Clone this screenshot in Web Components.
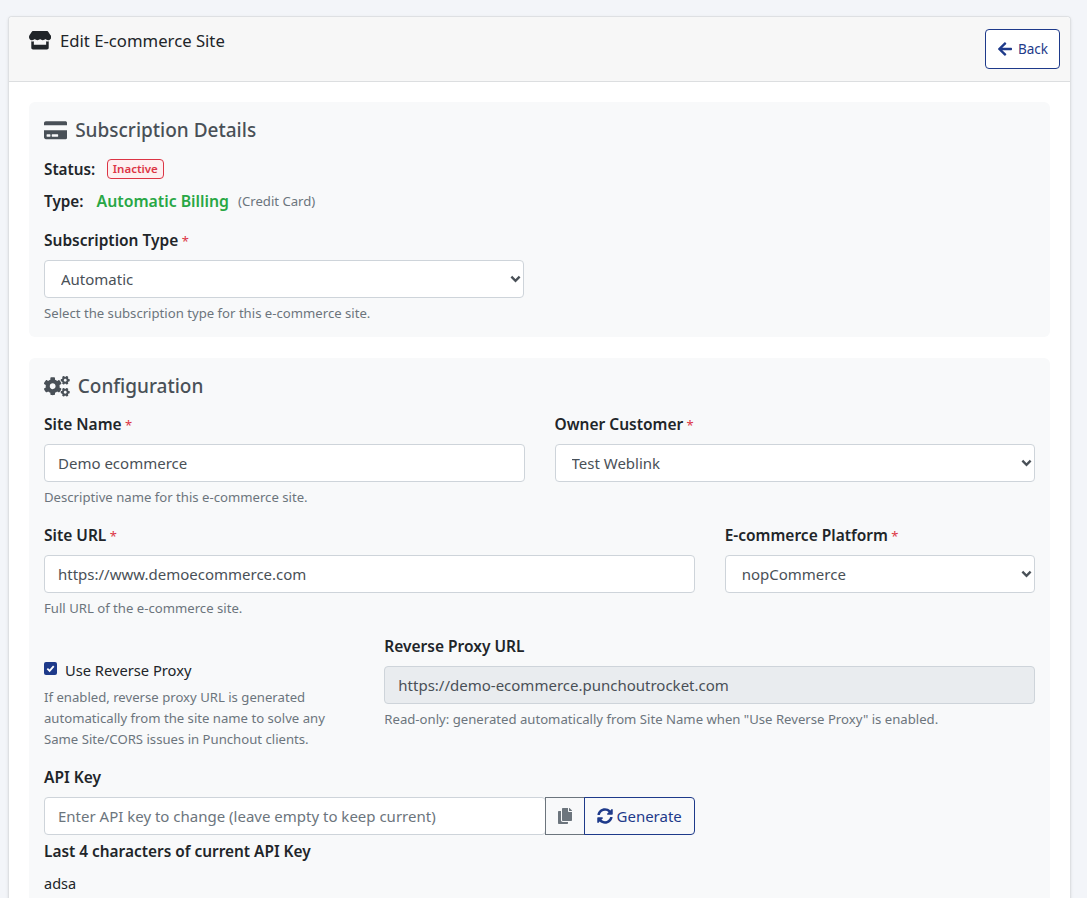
<!DOCTYPE html>
<html lang="en">
<head>
<meta charset="utf-8">
<title>Edit E-commerce Site</title>
<style>
    html, body { height: 100%; overflow: hidden; }
    body {
        margin: 0;
        padding: 16px 16px 0 8px;
        box-sizing: border-box;
        background: #f3f5f9;
        color: #212529;
        font: 16px/24px "Noto Sans", "Open Sans", sans-serif;
    }
</style>
</head>
<body>

<template id="card-template">
    <style>
        :host { display: block; background: #fff; border: 1px solid #dee0e3; border-bottom: 0; border-radius: 4px 4px 0 0; box-shadow: 0 1px 3px rgba(0,0,0,.1); }
        header { display: flex; justify-content: space-between; height: 65px; box-sizing: border-box; padding: 12px 10px 0 20px; background: #f7f7f7; border-bottom: 1px solid #dcdee0; border-radius: 4px 4px 0 0; }
        h1 { display: flex; gap: 9px; margin: 0; font-size: 16.7px; font-weight: 400; line-height: 24px; }
        ::slotted([slot="icon"]) { width: 22px; height: 18.5px; margin-top: 2px; fill: #212529; }
        main { padding: 20px 20px 0; display: grid; gap: 21px; }
    </style>
    <header>
        <h1><slot name="icon"></slot><slot name="title"></slot></h1>
        <slot name="action"></slot>
    </header>
    <main><slot></slot></main>
</template>

<template id="section-template">
    <style>
        :host { display: block; padding: 15px 15px 13px; background: #f8f9fa; border-radius: 6px; }
        h2 { display: flex; align-items: center; gap: 8px; margin: 0 0 13px; height: 27px; font-size: 19px; font-weight: 500; line-height: 27px; color: #495057; }
        ::slotted(svg) { height: 20.6px; width: auto; flex: none; fill: #495057; }
    </style>
    <h2><slot name="icon"></slot><slot name="title"></slot></h2>
    <slot></slot>
</template>

<template id="row-template">
    <style>
        :host { display: grid; column-gap: 30px; grid-template-columns: var(--cols, 1fr 1fr); }
    </style>
    <slot></slot>
</template>

<template id="field-template">
    <style>
        :host { display: block; margin-bottom: 16px; min-width: 0; }
        label { display: block; margin-bottom: 9px; font-size: 15.5px; font-weight: 600; line-height: 22px; color: #212529; }
        .req { display: none; font-size: 13px; line-height: 0; color: #dc3545; font-weight: 400; }
        :host([required]) .req { display: inline; }
        .help { display: block; margin-top: 5px; font-size: 13.15px; line-height: 21px; color: #6c757d; }
        :host([nohelp]) .help { display: none; }
    </style>
    <label><span id="label"></span><span class="req"> *</span></label>
    <slot></slot>
    <span class="help"><slot name="help"></slot></span>
</template>

<template id="input-template">
    <style>
        :host { display: block; }
        input { display: block; width: 100%; height: 38px; box-sizing: border-box; padding: 0 13px; font: 15px "Noto Sans", sans-serif; color: #495057; background: #fff; border: 1px solid #ced4da; border-radius: 4px; outline: 0; }
        input::placeholder { color: #6c757d; opacity: 1; }
        input[readonly] { background: #e9ecef; }
    </style>
    <input>
</template>

<template id="select-template">
    <style>
        :host { display: block; position: relative; }
        select { display: block; width: 100%; height: 38px; box-sizing: border-box; padding: 0 30px 0 16px; font: 15px "Noto Sans", sans-serif; color: #495057; background: #fff; border: 1px solid #ced4da; border-radius: 4px; outline: 0; appearance: none; }
        svg { position: absolute; right: 3px; top: 15px; width: 11px; height: 8px; fill: none; stroke: #495057; stroke-width: 2.6; pointer-events: none; }
    </style>
    <select><slot></slot></select>
    <svg viewBox="0 0 12 8"><path d="M1.5 1.5 6 6l4.5-4.5"/></svg>
</template>

<template id="badge-template">
    <style>
        :host { display: inline-block; padding: 0 5px; font-size: 11.5px; font-weight: 600; line-height: 18px; color: #dc3545; background: #fdf0f1; border: 1px solid #dc3545; border-radius: 4px; }
    </style>
    <slot></slot>
</template>

<template id="button-template">
    <style>
        :host { display: inline-flex; align-items: center; justify-content: center; gap: 4px; box-sizing: border-box; height: 38px; padding: 0 12px; font-size: 15px; color: #1e3a8a; background: #fff; border: 1px solid #1e3a8a; border-radius: 4px; cursor: pointer; }
        ::slotted(svg) { height: 16px; width: auto; flex: none; fill: currentColor; }
    </style>
    <slot></slot>
</template>

<template id="checkbox-template">
    <style>
        :host { display: flex; align-items: center; gap: 8px; font-size: 14.7px; line-height: 24px; }
        span { display: flex; align-items: center; justify-content: center; width: 13px; height: 13px; background: #1e3a8a; border-radius: 2px; margin-top: -3px; }
        svg { width: 9px; height: 9px; fill: none; stroke: #fff; stroke-width: 2; }
    </style>
    <span><svg viewBox="0 0 10 10"><path d="M1.5 5.2 4 7.7l4.6-5.4"/></svg></span>
    <slot></slot>
</template>

<store-card>
    <svg slot="icon" viewBox="0 0 616 512"><path d="M602 118.6 537.1 15C531.3 5.7 521 0 510 0H106C95 0 84.7 5.7 78.9 15L14 118.6c-33.9 54.1-3.9 129.3 59.4 137.9 4.6.6 9.1.9 13.8.9 29.9 0 56.4-13.1 74.6-33.4 18.2 20.3 44.8 33.4 74.6 33.4s56.4-13.1 74.6-33.4c18.2 20.3 44.8 33.4 74.6 33.4 29.9 0 56.4-13.1 74.6-33.4 18.2 20.3 44.8 33.4 74.6 33.4 4.6 0 9.2-.3 13.7-.9 63.5-8.5 93.6-83.7 59.4-137.9zM64 283v181c0 26.5 21.5 48 48 48h392c26.5 0 48-21.5 48-48V283c-20 7-50 7-72 0v101H136V283c-22 7-52 7-72 0z"/></svg>
    <span slot="title">Edit E-commerce Site</span>
    <store-button slot="action" style="height:40px;width:75px;padding-right:0;font-size:13.5px;justify-content:flex-start;gap:6px"><svg viewBox="0 0 448 512"><path d="M257.5 445.1l-22.2 22.2c-9.4 9.4-24.6 9.4-33.9 0L7 273c-9.4-9.4-9.4-24.6 0-33.9L201.4 44.7c9.4-9.4 24.6-9.4 33.9 0l22.2 22.2c9.5 9.5 9.3 25-.4 34.3L136.6 216H424c13.3 0 24 10.7 24 24v32c0 13.3-10.7 24-24 24H136.6l120.5 114.8c9.8 9.3 10 24.8.4 34.3z"/></svg>Back</store-button>

    <form-section>
        <svg slot="icon" viewBox="0 0 576 512"><path d="M0 432c0 26.5 21.5 48 48 48h480c26.5 0 48-21.5 48-48V256H0v176zm192-68c0-6.6 5.4-12 12-12h136c6.6 0 12 5.4 12 12v40c0 6.6-5.4 12-12 12H204c-6.6 0-12-5.4-12-12v-40zm-128 0c0-6.6 5.4-12 12-12h72c6.6 0 12 5.4 12 12v40c0 6.6-5.4 12-12 12H76c-6.6 0-12-5.4-12-12v-40zM576 80v48H0V80c0-26.5 21.5-48 48-48h480c26.5 0 48 21.5 48 48z"/></svg>
        <span slot="title">Subscription Details</span>
        <div style="display:flex;gap:11.5px;align-items:center;height:32px;margin-top:-4px;font-size:15.3px;font-weight:600">Status: <status-badge>Inactive</status-badge></div>
        <div style="display:flex;gap:12px;align-items:center;height:32px;font-size:15.3px;font-weight:600">Type: <span style="font-size:15.8px;color:#28a745;margin-left:1px">Automatic Billing</span><span style="font-size:13.15px;font-weight:400;color:#6c757d;margin-left:-3px">(Credit Card)</span></div>
        <form-row style="--cols:480px 1fr;margin-top:12px">
            <form-field label="Subscription Type" required style="margin:0">
                <form-select><option>Automatic</option></form-select>
                <span slot="help">Select the subscription type for this e-commerce site.</span>
            </form-field>
        </form-row>
    </form-section>

    <form-section style="padding-bottom:60px">
        <svg slot="icon" viewBox="0 0 640 512"><path d="M512.1 191l-8.2 14.3c-3 5.3-9.4 7.5-15.1 5.4-11.8-4.4-22.6-10.7-32.1-18.6-4.6-3.8-5.8-10.5-2.8-15.7l8.2-14.3c-6.9-8-12.3-17.3-15.9-27.4h-16.5c-6 0-11.2-4.3-12.2-10.3-2-12-2.1-24.6 0-37.1 1-6 6.2-10.4 12.2-10.4h16.5c3.6-10.1 9-19.4 15.9-27.4l-8.2-14.3c-3-5.2-1.9-11.9 2.8-15.7 9.5-7.9 20.4-14.2 32.1-18.6 5.7-2.1 12.1.1 15.1 5.4l8.2 14.3c10.5-1.9 21.2-1.9 31.7 0L552 6.3c3-5.3 9.4-7.5 15.1-5.4 11.8 4.4 22.6 10.7 32.1 18.6 4.6 3.8 5.8 10.5 2.8 15.7l-8.2 14.3c6.9 8 12.3 17.3 15.9 27.4h16.5c6 0 11.2 4.3 12.2 10.3 2 12 2.1 24.6 0 37.1-1 6-6.2 10.4-12.2 10.4h-16.5c-3.6 10.1-9 19.4-15.9 27.4l8.2 14.3c3 5.2 1.9 11.9-2.8 15.7-9.5 7.9-20.4 14.2-32.1 18.6-5.7 2.1-12.1-.1-15.1-5.4l-8.2-14.3c-10.4 1.9-21.2 1.9-31.7 0zm-10.5-58.8c38.5 29.6 82.4-14.3 52.8-52.8-38.5-29.7-82.4 14.3-52.8 52.8zM386.3 286.1l33.7 16.8c10.1 5.8 14.5 18.1 10.5 29.1-8.9 24.2-26.4 46.4-42.6 65.8-7.4 8.9-20.2 11.1-30.3 5.3l-29.1-16.8c-16 13.7-34.6 24.6-54.9 31.7v33.6c0 11.6-8.3 21.6-19.7 23.6-24.6 4.2-50.4 4.4-75.9 0-11.5-2-20-11.9-20-23.6V418c-20.3-7.2-38.9-18-54.9-31.7L74 403c-10 5.8-22.9 3.6-30.3-5.3-16.2-19.4-33.3-41.6-42.2-65.7-4-10.9.4-23.2 10.5-29.1l33.3-16.8c-3.9-20.9-3.9-42.4 0-63.4L12 205.8c-10.1-5.8-14.6-18.1-10.5-29 8.9-24.2 26-46.4 42.2-65.8 7.4-8.9 20.2-11.1 30.3-5.3l29.1 16.8c16-13.7 34.6-24.6 54.9-31.7V57.1c0-11.5 8.2-21.5 19.6-23.5 24.6-4.2 50.5-4.4 76-.1 11.5 2 20 11.9 20 23.6v33.6c20.3 7.2 38.9 18 54.9 31.7l29.1-16.8c10-5.8 22.9-3.6 30.3 5.3 16.2 19.4 33.2 41.6 42.1 65.8 4 10.9.1 23.2-10 29.1l-33.7 16.8c3.9 21 3.9 42.5 0 63.5zm-117.6 21.1c59.2-77-28.7-164.9-105.7-105.7-59.2 77 28.7 164.9 105.7 105.7zm243.4 182.7l-8.2 14.3c-3 5.3-9.4 7.5-15.1 5.4-11.8-4.4-22.6-10.7-32.1-18.6-4.6-3.8-5.8-10.5-2.8-15.7l8.2-14.3c-6.9-8-12.3-17.3-15.9-27.4h-16.5c-6 0-11.2-4.3-12.2-10.3-2-12-2.1-24.6 0-37.1 1-6 6.2-10.4 12.2-10.4h16.5c3.6-10.1 9-19.4 15.9-27.4l-8.2-14.3c-3-5.2-1.9-11.9 2.8-15.7 9.5-7.9 20.4-14.2 32.1-18.6 5.7-2.1 12.1.1 15.1 5.4l8.2 14.3c10.5-1.9 21.2-1.9 31.7 0l8.2-14.3c3-5.3 9.4-7.5 15.1-5.4 11.8 4.4 22.6 10.7 32.1 18.6 4.6 3.8 5.8 10.5 2.8 15.7l-8.2 14.3c6.9 8 12.3 17.3 15.9 27.4h16.5c6 0 11.2 4.3 12.2 10.3 2 12 2.1 24.6 0 37.1-1 6-6.2 10.4-12.2 10.4h-16.5c-3.6 10.1-9 19.4-15.9 27.4l8.2 14.3c3 5.2 1.9 11.9-2.8 15.7-9.5 7.9-20.4 14.2-32.1 18.6-5.7 2.1-12.1-.1-15.1-5.4l-8.2-14.3c-10.4 1.9-21.2 1.9-31.7 0zM501.6 431c38.5 29.6 82.4-14.3 52.8-52.8-38.5-29.6-82.4 14.3-52.8 52.8z"/></svg>
        <span slot="title">Configuration</span>

        <form-row>
            <form-field label="Site Name" required>
                <form-input value="Demo ecommerce"></form-input>
                <span slot="help">Descriptive name for this e-commerce site.</span>
            </form-field>
            <form-field label="Owner Customer" required>
                <form-select><option>Test Weblink</option></form-select>
            </form-field>
        </form-row>

        <form-row style="--cols:650.67px 1fr">
            <form-field label="Site URL" required>
                <form-input value="https://www.demoecommerce.com"></form-input>
                <span slot="help">Full URL of the e-commerce site.</span>
            </form-field>
            <form-field label="E-commerce Platform" required>
                <form-select><option>nopCommerce</option></form-select>
            </form-field>
        </form-row>

        <form-row style="--cols:310.33px 1fr">
            <div style="padding-top:23px;margin-bottom:16px">
                <check-box>Use Reverse Proxy</check-box>
                <div style="font-size:13.15px;line-height:21px;color:#6c757d;margin-top:5px">If enabled, reverse proxy URL is generated automatically from the site name to solve any Same Site/CORS issues in Punchout clients.</div>
            </div>
            <form-field label="Reverse Proxy URL">
                <form-input value="https://demo-ecommerce.punchoutrocket.com" readonly></form-input>
                <span slot="help">Read-only: generated automatically from Site Name when "Use Reverse Proxy" is enabled.</span>
            </form-field>
        </form-row>

        <form-row style="--cols:650.67px 1fr">
            <div>
                <form-field label="API Key" nohelp style="margin:0">
                    <div style="display:flex">
                        <form-input placeholder="Enter API key to change (leave empty to keep current)" style="flex:1"></form-input>
                        <store-button style="color:#6c757d;border-color:#6c757d;border-radius:0;background:none;width:40px;padding:0;margin-left:-1px"><svg viewBox="0 0 448 512"><path d="M320 448v40c0 13.255-10.745 24-24 24H24c-13.255 0-24-10.745-24-24V120c0-13.255 10.745-24 24-24h72v296c0 30.879 25.121 56 56 56h168zm0-344V0H152c-13.255 0-24 10.745-24 24v368c0 13.255 10.745 24 24 24h272c13.255 0 24-10.745 24-24V128H344c-13.2 0-24-10.8-24-24zm120.971-31.029L375.029 7.029A24 24 0 0 0 358.059 0H352v96h96v-6.059a24 24 0 0 0-7.029-16.97z"/></svg></store-button>
                        <store-button style="border-radius:0 4px 4px 0;background:none;width:111px;padding:0;margin-left:-1px"><svg viewBox="0 0 512 512"><path d="M370.72 133.28C339.458 104.008 298.888 87.962 255.848 88c-77.458.068-144.328 53.178-162.791 126.85-1.344 5.363-6.122 9.15-11.651 9.15H24.103c-7.498 0-13.194-6.807-11.807-14.176C33.933 94.924 134.813 8 256 8c66.448 0 126.791 26.136 171.315 68.685L463.03 40.97C478.149 25.851 504 36.559 504 57.941V192c0 13.255-10.745 24-24 24H345.941c-21.382 0-32.09-25.851-16.971-40.971l41.75-41.749zM32 296h134.059c21.382 0 32.09 25.851 16.971 40.971l-41.75 41.75c31.262 29.273 71.835 45.319 114.876 45.28 77.418-.07 144.315-53.144 162.787-126.849 1.344-5.363 6.122-9.15 11.651-9.15h57.304c7.498 0 13.194 6.807 11.807 14.176C478.067 417.076 377.187 504 256 504c-66.448 0-126.791-26.136-171.315-68.685L48.97 471.03C33.851 486.149 8 475.441 8 454.059V320c0-13.255 10.745-24 24-24z"/></svg>Generate</store-button>
                    </div>
                </form-field>
                <div style="font-size:15.4px;font-weight:600;line-height:22px;margin-top:6px">Last 4 characters of current API Key</div>
                <div style="font-size:14.5px;line-height:22px;margin-top:9px;color:#212529">adsa</div>
            </div>
        </form-row>
    </form-section>
</store-card>

<script>
    // every element just clones its template into an open shadow root
    class TemplateElement extends HTMLElement {
        constructor() {
            super();
            const template = document.getElementById(this.constructor.templateId);
            this.attachShadow({mode: 'open'}).appendChild(template.content.cloneNode(true));
        }
    }

    class StoreCard extends TemplateElement { static templateId = 'card-template'; }
    class FormSection extends TemplateElement { static templateId = 'section-template'; }
    class FormRow extends TemplateElement { static templateId = 'row-template'; }
    class StatusBadge extends TemplateElement { static templateId = 'badge-template'; }
    class StoreButton extends TemplateElement { static templateId = 'button-template'; }
    class CheckBox extends TemplateElement { static templateId = 'checkbox-template'; }

    class FormField extends TemplateElement {
        static templateId = 'field-template';
        connectedCallback() {
            this.shadowRoot.querySelector('#label').textContent = this.getAttribute('label');
        }
    }

    class FormInput extends TemplateElement {
        static templateId = 'input-template';
        connectedCallback() {
            const input = this.shadowRoot.querySelector('input');
            ['value', 'placeholder', 'readonly'].forEach(name => {
                if(this.hasAttribute(name)) {
                    input.setAttribute(name, this.getAttribute(name));
                }
            });
        }
    }

    class FormSelect extends TemplateElement {
        static templateId = 'select-template';
        connectedCallback() {
            // <option> cannot be slotted into a <select>, so move them over
            const select = this.shadowRoot.querySelector('select');
            select.replaceChildren(...this.querySelectorAll('option'));
        }
    }

    customElements.define('store-card', StoreCard);
    customElements.define('form-section', FormSection);
    customElements.define('form-row', FormRow);
    customElements.define('form-field', FormField);
    customElements.define('form-input', FormInput);
    customElements.define('form-select', FormSelect);
    customElements.define('status-badge', StatusBadge);
    customElements.define('store-button', StoreButton);
    customElements.define('check-box', CheckBox);
</script>
</body>
</html>
